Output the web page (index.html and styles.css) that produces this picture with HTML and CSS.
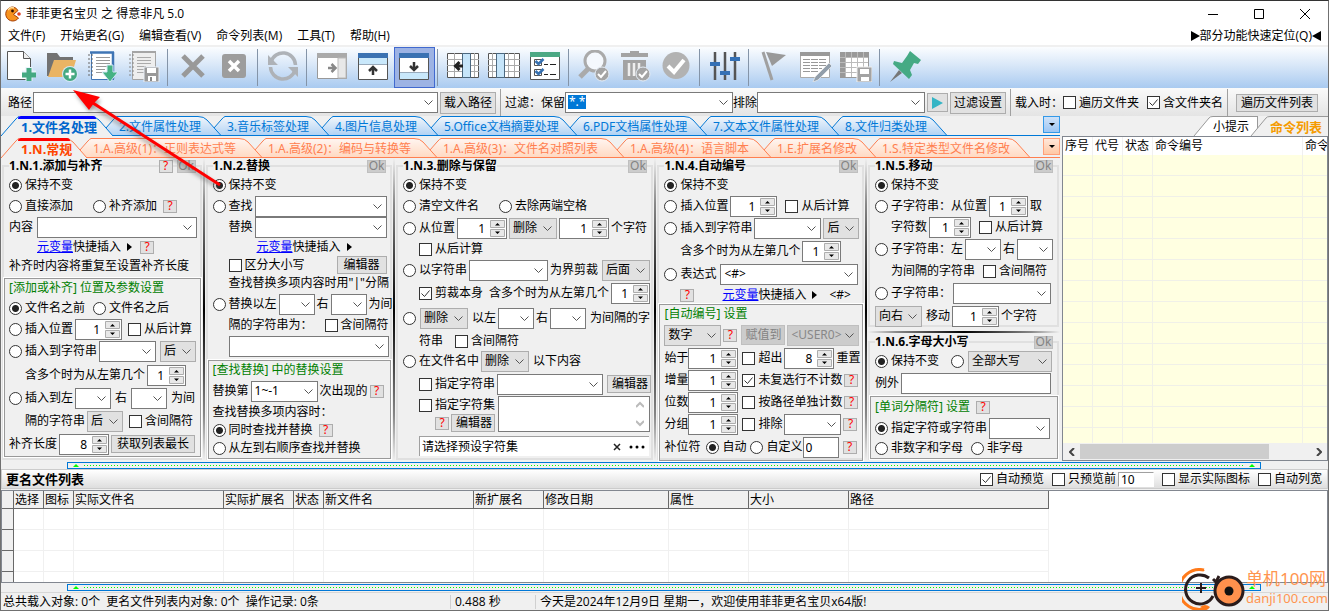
FILE: index.html
```html
<!DOCTYPE html>
<html lang="zh-CN">
<head>
<meta charset="utf-8">
<title>菲菲更名宝贝 之 得意非凡 5.0</title>
<link rel="stylesheet" href="styles.css">
</head>
<body>
<div class="window">
<header class="titlebar">
  <svg class="logo" viewBox="0 0 16 16"><path d="M8 1a7 7 0 1 0 5.500 11L8.500 8.500 13 4.500A7 7 0 0 0 8 1z" fill="#f7931e" stroke="#a63c00"/><path d="M3 4a5 5 0 0 1 6-2" stroke="#ffe0a0" stroke-width="1.500" fill="none"/><circle cx="7.500" cy="5" r="1.400" fill="#301000"/><circle cx="14" cy="8" r="1.800" fill="#e04020"/></svg>
  <h1>菲菲更名宝贝 之 得意非凡 5.0</h1>
  <div class="caption">
    <button aria-label="最小化"><svg viewBox="0 0 10 10"><path d="M0 5.500h10" stroke="#000"/></svg></button>
    <button aria-label="最大化"><svg viewBox="0 0 10 10"><path d="M.5.5h9v9h-9z" fill="none" stroke="#000"/></svg></button>
    <button aria-label="关闭"><svg viewBox="0 0 10 10"><path d="M0 0l10 10M10 0L0 10" stroke="#000"/></svg></button>
  </div>
</header>
<nav class="menubar">
  <button>文件(F)</button><button>开始更名(G)</button><button>编辑查看(V)</button><button>命令列表(M)</button><button>工具(T)</button><button>帮助(H)</button>
  <button class="quick"><svg width="9" height="10" viewBox="0 0 9 10"><path d="M0 0l9 5-9 5z"/></svg>部分功能快速定位(Q)<svg width="9" height="10" viewBox="0 0 9 10"><path d="M9 0L0 5l9 5z"/></svg></button>
</nav>

<div class="toolbar">
  <button aria-label="新建"><svg viewBox="0 0 32 32"><path d="M2.500 1.500h16l7 7v21h-23z" fill="#fff" stroke="#555"/><path d="M18.500 1.500v7h7" fill="#eee" stroke="#555"/><path d="M24 17v14M17 24h14" stroke="#eaf3fc" stroke-width="7"/><path d="M24 18v13M17 25h14" stroke="#45a982" stroke-width="5"/></svg></button>
  <button aria-label="添加文件夹"><svg viewBox="0 0 32 32"><path d="M1 3h10l3 4h13v6H8L3 26H1z" fill="#727272"/><path d="M8 10h22l-5 17H2z" fill="#eab464"/><circle cx="24" cy="24" r="8" fill="#d8e8f8"/><circle cx="24" cy="24" r="7" fill="#45a982"/><path d="M24 19.500v9M19.500 24h9" stroke="#fff" stroke-width="2.500"/></svg></button>
  <button aria-label="载入列表"><svg viewBox="0 0 32 32"><path d="M4.500 2h22v27h-22z" fill="#fff"/><path d="M3 2.500h24M26 2v27" stroke="#3f75b5" stroke-width="2.500" fill="none"/><path d="M4.500 3v26.500H27" stroke="#3f75b5" fill="none"/><path d="M9 7.500h14M9 10.500h14M9 13.500h14M9 16.500h14M9 19.500h9M9 22.500h9" stroke="#999"/><path d="M1 5h5M1 9h5M1 13h5M1 17h5M1 21h5M1 25h5" stroke="#666" stroke-dasharray="2 1"/><path d="M20 15h6v7h5l-8 10-8-10h5z" fill="#45b284" stroke="#d8e8f8"/></svg></button>
  <button aria-label="保存列表"><svg viewBox="0 0 32 32"><path d="M4.500 1.500h23v28h-23z" fill="#eee" stroke="#a5a5a5"/><path d="M4 2h24" stroke="#a5a5a5" stroke-width="2"/><path d="M9 7.500h14M9 10.500h14M9 13.500h14M9 16.500h9M9 19.500h7M9 22.500h7" stroke="#aaa"/><path d="M1 5h5M1 9h5M1 13h5M1 17h5M1 21h5M1 25h5" stroke="#888" stroke-dasharray="2 1"/><path d="M16 17h15v15H16z" fill="#999" stroke="#e8eef6"/><path d="M19 18h9v5h-9zM20 26h8v5h-8z" fill="#fff"/><path d="M22 27h2v4h-2z" fill="#888"/></svg></button>
  <i class="sep"></i>
  <button aria-label="移除"><svg viewBox="0 0 32 32"><path d="M6 6l20 20M26 6L6 26" stroke="#999" stroke-width="5"/></svg></button>
  <button aria-label="清空"><svg viewBox="0 0 32 32"><rect x="4" y="4" width="24" height="24" rx="3" fill="#9d9d9d"/><path d="M11 11l10 10M21 11L11 21" stroke="#fff" stroke-width="3.500"/></svg></button>
  <i class="sep"></i>
  <button aria-label="刷新"><svg viewBox="0 0 32 32"><path d="M4 12A12.500 12.500 0 0 1 28.500 15M28 20A12.500 12.500 0 0 1 3.500 17" fill="none" stroke="#aeb2b7" stroke-width="3.500"/><path d="M1 5v10h10zM31 27V17H21z" fill="#aeb2b7"/></svg></button>
  <i class="sep"></i>
  <button aria-label="右侧面板"><svg viewBox="0 0 32 32"><path d="M1.500 3.500h29v25h-29z" fill="#fff" stroke="#999"/><path d="M1 3h30v5H1z" fill="#aaa"/><path d="M22 8h8v20h-8z" fill="#e8e8e8" stroke="#bbb"/><path d="M12 18h7M15.500 14l4 4-4 4" stroke="#888" stroke-width="2.500" fill="none"/></svg></button>
  <button aria-label="上方面板"><svg viewBox="0 0 32 32"><path d="M1.500 3.500h29v26h-29z" fill="#fff" stroke="#555"/><path d="M1 3h30v5H1z" fill="#3b72b2"/><path d="M2 8h28v6H2z" fill="#c9e8fb"/><path d="M2 14.500h28" stroke="#9ab"/><path d="M16 25v-7M12 21l4-4 4 4" stroke="#333" stroke-width="2.500" fill="none"/></svg></button>
  <button class="on" aria-label="下方面板"><svg viewBox="0 0 32 32"><path d="M1.500 3.500h29v26h-29z" fill="#fff" stroke="#555"/><path d="M1 3h30v5H1z" fill="#3b72b2"/><path d="M2 23h28v6H2z" fill="#c9e8fb"/><path d="M2 22.500h28" stroke="#9ab"/><path d="M16 12v7M12 16l4 4 4-4" stroke="#333" stroke-width="2.500" fill="none"/></svg></button>
  <i class="sep"></i>
  <button aria-label="插入列"><svg viewBox="0 0 32 32"><path d="M.5 3.500h31v24H.5z" fill="#fff" stroke="#555"/><path d="M0 9.500h32M0 15.500h32M0 21.500h32M7.500 3v24M27.500 3v24" stroke="#aaa"/><path d="M15.500 3.500h8v24h-8z" fill="#c6e5fa" stroke="#4b6880"/><path d="M16 16H9M12.500 12l-4 4 4 4" stroke="#222" stroke-width="3" fill="none"/></svg></button>
  <button aria-label="列设置"><svg viewBox="0 0 32 32"><path d="M.5 3.500h31v24H.5z" fill="#fff" stroke="#555"/><path d="M0 9.500h32M0 15.500h32M0 21.500h32M4.500 3v24M20.500 3v24M26.500 3v24" stroke="#aaa"/><path d="M8.500 3.500h8v24h-8z" fill="#c6e5fa" stroke="#4b6880"/></svg></button>
  <button aria-label="选项列表"><svg viewBox="0 0 32 32"><path d="M1.500 2.500h29v27h-29z" fill="#fff" stroke="#555"/><path d="M1 2h30v5H1z" fill="#4ba884"/><path d="M5.500 9.500h7v6h-7zM5.500 19.500h7v6h-7z" fill="#fff" stroke="#555"/><path d="M6.500 11l3 3 5-5M6.500 21l3 3 5-5" fill="none" stroke="#3670b0" stroke-width="2.500"/><path d="M15 14.500h4M21 14.500h6M15 24.500h4M21 24.500h6" stroke="#222"/></svg></button>
  <i class="sep"></i>
  <button aria-label="查找已选"><svg viewBox="0 0 32 32"><path d="M10 19L2 27" stroke="#aaa" stroke-width="5"/><circle cx="17" cy="11" r="10" fill="#f4f8fd" stroke="#aaa" stroke-width="3"/><circle cx="24" cy="24" r="7" fill="#a4a4a4" stroke="#e5edf6"/><path d="M20 24l3 3 5-6" stroke="#fff" stroke-width="2" fill="none"/></svg></button>
  <button aria-label="删除已选"><svg viewBox="0 0 32 32"><path d="M2 3h27v4H2zM11 1h9v4h-9zM4 10h23v20H4z" fill="#a3a3a3"/><path d="M10 13v13M15 13v13M20 13v13" stroke="#eee" stroke-width="2.500"/><circle cx="24" cy="24" r="7" fill="#a4a4a4" stroke="#e5edf6"/><path d="M20 24l3 3 5-6" stroke="#fff" stroke-width="2" fill="none"/></svg></button>
  <button aria-label="执行"><svg viewBox="0 0 32 32"><circle cx="16" cy="15.500" r="13.500" fill="#b2b2b2"/><path d="M8 16l6 6 10-12" stroke="#fff" stroke-width="4" fill="none"/></svg></button>
  <i class="sep"></i>
  <button aria-label="设置"><svg viewBox="0 0 32 32"><path d="M6 2v28M16 2v28M26 2v28" stroke="#555" stroke-width="2.500"/><path d="M1 12h10v4H1zM11 21h10v4H11zM21 7h10v4H21z" fill="#3470b5"/></svg></button>
  <i class="sep"></i>
  <button aria-label="标记"><svg viewBox="0 0 32 32"><path d="M5 2l9 28" stroke="#a0a0a0" stroke-width="3"/><path d="M8 2l20 3-14 11z" fill="#999"/></svg></button>
  <button aria-label="编辑列表"><svg viewBox="0 0 32 32"><path d="M1.500 2.500h29v25h-29z" fill="#fff" stroke="#aaa"/><path d="M1 2h30v4H1z" fill="#999"/><path d="M4 9.500h24M4 12.500h24M4 15.500h24M4 18.500h19M4 21.500h15" stroke="#999" stroke-dasharray="7 1"/><path d="M30 13L16 27l-2 5 5-2 14-14z" fill="#929eaa" stroke="#eee" stroke-width=".7"/></svg></button>
  <button aria-label="保存表格"><svg viewBox="0 0 32 32"><path d="M.5 2.500h28v25H.5z" fill="#fff" stroke="#999"/><path d="M0 2h29v5H0zM0 2h5v26H0z" fill="#999"/><path d="M0 7.500h28M0 12.500h28M0 17.500h28M0 22.500h28M5.500 2v25M11.500 2v25M17.500 2v25M23.500 2v25" stroke="#bbb"/><path d="M17 17h15v15H17z" fill="#a3a3a3" stroke="#eee"/><path d="M20 19h9v5h-9zM21 27h8v4h-8z" fill="#fff"/></svg></button>
  <i class="sep"></i>
  <button aria-label="置顶"><svg viewBox="0 0 32 32"><path d="M10 20L1 32l12-9z" fill="#777"/><path d="M21 1l11 9-3 4-4-1-4 7 2 5-3 4L4 14l1-3 8 2 5-7z" fill="#45aa84"/></svg></button>
</div>

<div class="filterbar">
  <label for="path">路径</label><select id="path" class="grow"><option></option></select>
  <button class="btn">载入路径</button><i class="sep"></i>
  <label for="keep">过滤：保留</label><span class="combo"><input id="keep" class="grow" value="*.*"><mark>*.*</mark></span>
  <label for="drop">排除</label><select id="drop" class="w168"><option></option></select>
  <button class="btn play" aria-label="应用过滤"><svg width="12" height="12" viewBox="0 0 12 12"><path d="M1 0l11 6-11 6z" fill="#35b5c5"/></svg></button>
  <button class="btn">过滤设置</button><i class="sep"></i>
  <span>载入时：</span><label><input type="checkbox">遍历文件夹</label>
  <label class="ml8"><input type="checkbox" checked>含文件夹名</label><i class="sep"></i>
  <button class="btn small ml4">遍历文件列表</button>
</div>

<main>
<section class="left">
  <nav class="tabs blue">
    <button class="tab active">1.文件名处理</button><button class="tab">2.文件属性处理</button><button class="tab">3.音乐标签处理</button><button class="tab">4.图片信息处理</button><button class="tab">5.Office文档摘要处理</button><button class="tab">6.PDF文档属性处理</button><button class="tab">7.文本文件属性处理</button><button class="tab">8.文件归类处理</button><button class="more" aria-label="更多"></button>
  </nav>
  <nav class="tabs coral">
    <button class="tab active">1.N.常规</button><button class="tab">1.A.高级(1)：正则表达式等</button><button class="tab">1.A.高级(2)：编码与转换等</button><button class="tab">1.A.高级(3)：文件名对照列表</button><button class="tab">1.A.高级(4)：语言脚本</button><button class="tab">1.E.扩展名修改</button><button class="tab">1.S.特定类型文件名修改</button><button class="more" aria-label="更多"></button>
  </nav>
  <div class="panels">
    <section class="panel">
      <h2><span>1.N.1.添加与补齐</span><button class="q">?</button><button class="ok" disabled>Ok</button></h2>
      <div class="r22"><label><input type="radio" name="a" checked>保持不变</label></div>
      <div class="r20"><label><input type="radio" name="a">直接添加</label><label class="ml20"><input type="radio" name="a">补齐添加</label><button class="q ml6">?</button></div>
      <div class="r22"><label for="c1">内容</label><select id="c1" class="w160 ml4"><option></option></select></div>
      <div class="r18 in28"><a href="#">元变量</a><span>快捷插入</span><i class="tri"></i><button class="q ml8">?</button></div>
      <div class="r20">补齐时内容将重复至设置补齐长度</div>
      <div class="group">
        <h3 class="r18">[添加或补齐] 位置及参数设置</h3>
        <div class="r22"><label><input type="radio" name="b" checked>文件名之前</label><label class="ml8"><input type="radio" name="b">文件名之后</label></div>
        <div class="r20"><label><input type="radio" name="b">插入位置</label><input type="number" class="w47 ml2" value="1" aria-label="位置"><label class="ml6"><input type="checkbox">从后计算</label></div>
        <div class="r24"><label><input type="radio" name="b">插入到字符串</label><select class="w57 ml2" aria-label="字符串"><option></option></select><select class="gray w36 ml4" aria-label="前后"><option>后</option></select></div>
        <div class="r24 in16">含多个时为从左第几个<input type="number" class="w39 ml2" value="1" aria-label="第几个"></div>
        <div class="r22"><label><input type="radio" name="b">插入到左</label><select class="w36 ml2" aria-label="左"><option></option></select><span class="ml4">右</span><select class="w36 ml4" aria-label="右"><option></option></select><span class="ml4">为间</span></div>
        <div class="r24 in16">隔的字符串<select class="gray w36 ml2" aria-label="前后"><option>后</option></select><label class="ml6"><input type="checkbox">含间隔符</label></div>
        <div class="r22"><label for="len">补齐长度</label><input type="number" id="len" class="w50 ml2" value="8"><button class="btn small w84 ml2">获取列表最长</button></div>
      </div>
    </section>
    <i class="rule"></i>
    <section class="panel">
      <h2><span>1.N.2.替换</span><button class="ok" disabled>Ok</button></h2>
      <div class="r22"><label><input type="radio" name="c" checked>保持不变</label></div>
      <div class="r20"><label><input type="radio" name="c">查找</label><select class="w132 ml2" aria-label="查找"><option></option></select></div>
      <div class="r22 in16">替换<select class="w132 ml2" aria-label="替换"><option></option></select></div>
      <div class="r18 in44"><a href="#">元变量</a><span>快捷插入</span><i class="tri"></i></div>
      <div class="r18 in16"><label><input type="checkbox">区分大小写</label><button class="btn small w50 ml32">编辑器</button></div>
      <div class="r18 in16">查找替换多项内容时用"|"分隔</div>
      <div class="r24"><label><input type="radio" name="c">替换以左</label><select class="w36 ml2" aria-label="左"><option></option></select><span class="ml2">右</span><select class="w36 ml2" aria-label="右"><option></option></select><span class="ml2">为间</span></div>
      <div class="r18 in16">隔的字符串为：<label class="ml12"><input type="checkbox">含间隔符</label></div>
      <div class="r24 in16"><select class="w160" aria-label="替换内容"><option></option></select></div>
      <div class="group">
        <h3 class="r18">[查找替换] 中的替换设置</h3>
        <div class="r24">替换第<select class="w67 ml2" aria-label="次数"><option>1~-1</option></select><span class="ml2">次出现的</span><button class="q ml2">?</button></div>
        <div class="r18">查找替换多项内容时：</div>
        <div class="r18"><label><input type="radio" name="d" checked>同时查找并替换</label><button class="q ml6">?</button></div>
        <div class="r18"><label><input type="radio" name="d">从左到右顺序查找并替换</label></div>
      </div>
    </section>
    <i class="rule"></i>
    <section class="panel">
      <h2><span>1.N.3.删除与保留</span><button class="ok" disabled>Ok</button></h2>
      <div class="r22"><label><input type="radio" name="e" checked>保持不变</label></div>
      <div class="r20"><label><input type="radio" name="e">清空文件名</label><label class="ml20"><input type="radio" name="e">去除两端空格</label></div>
      <div class="r24"><label><input type="radio" name="e">从位置</label><input type="number" class="w50 ml2" value="1" aria-label="位置"><select class="gray w48 ml2" aria-label="操作"><option>删除</option></select><input type="number" class="w50 ml2" value="1" aria-label="字数"><span class="ml2">个字符</span></div>
      <div class="r18 in16"><label><input type="checkbox">从后计算</label></div>
      <div class="r24"><label><input type="radio" name="e">以字符串</label><select class="w79 ml2" aria-label="字符串"><option></option></select><span class="ml2">为界剪裁</span><select class="gray w48 ml4" aria-label="方向"><option>后面</option></select></div>
      <div class="r22 in16"><label><input type="checkbox" checked>剪裁本身</label><span class="ml6">含多个时为从左第几个</span><input type="number" class="w39 ml2" value="1" aria-label="第几个"></div>
      <div class="r28"><input type="radio" name="e" aria-label="间隔"><select class="gray w48 ml4" aria-label="操作"><option>删除</option></select><span class="ml4">以左</span><select class="w36 ml2" aria-label="左"><option></option></select><span class="ml2">右</span><select class="w36 ml2" aria-label="右"><option></option></select><span class="ml4">为间隔的字</span></div>
      <div class="r18 in16">符串<label class="ml12"><input type="checkbox">含间隔符</label></div>
      <div class="r22"><label><input type="radio" name="e">在文件名中</label><select class="gray w48 ml2" aria-label="操作"><option>删除</option></select><span class="ml4">以下内容</span></div>
      <div class="r24 in16"><label><input type="checkbox">指定字符串</label><select class="w106 ml2" aria-label="指定字符串"><option></option></select><button class="btn small w44 ml4">编辑器</button></div>
      <div class="charset in16">
        <div><label class="r18"><input type="checkbox">指定字符集</label><div class="r18 in16"><button class="q">?</button><button class="btn small w44 ml2">编辑器</button></div></div>
        <div class="area"><textarea aria-label="字符集"></textarea><svg width="8" height="26" viewBox="0 0 8 26"><path d="M0 6l4-4 4 4M0 20l4 4 4-4" fill="none" stroke="#bbb" stroke-width="2"/></svg></div>
      </div>
      <div class="r24 in16"><div class="preset"><input value="请选择预设字符集" aria-label="预设字符集"><button aria-label="清除"><svg width="8" height="8" viewBox="0 0 8 8"><path d="M1 1l6 6M7 1L1 7" stroke="#222" stroke-width="1.500"/></svg></button><button aria-label="更多"><svg width="16" height="4" viewBox="0 0 16 4"><circle cx="2" cy="2" r="1.500"/><circle cx="8" cy="2" r="1.500"/><circle cx="14" cy="2" r="1.500"/></svg></button></div></div>
    </section>
    <i class="rule"></i>
    <section class="panel">
      <h2><span>1.N.4.自动编号</span><button class="ok" disabled>Ok</button></h2>
      <div class="r22"><label><input type="radio" name="f" checked>保持不变</label></div>
      <div class="r20"><label><input type="radio" name="f">插入位置</label><input type="number" class="w47 ml2" value="1" aria-label="位置"><label class="ml8"><input type="checkbox">从后计算</label></div>
      <div class="r24"><label><input type="radio" name="f">插入到字符串</label><select class="w67 ml2" aria-label="字符串"><option></option></select><select class="gray w36 ml2" aria-label="前后"><option>后</option></select></div>
      <div class="r22 in16">含多个时为从左第几个<input type="number" class="w39 ml2" value="1" aria-label="第几个"></div>
      <div class="r24"><label><input type="radio" name="f">表达式</label><select class="w138 ml4" aria-label="表达式"><option>&lt;#&gt;</option></select></div>
      <div class="r18 in16"><button class="q">?</button><a href="#" class="ml28">元变量</a><span>快捷插入</span><i class="tri"></i><span class="ml12">&lt;#&gt;</span></div>
      <div class="group flush">
        <h3 class="r18">[自动编号] 设置</h3>
        <div class="r24"><select class="gray w57" aria-label="类型"><option>数字</option></select><button class="q ml2">?</button><button class="btn w44 ml4" disabled>赋值到</button><select class="w72 ml2" disabled aria-label="变量"><option>&lt;USER0&gt;</option></select></div>
        <div class="r22"><label for="n1">始于</label><input type="number" id="n1" class="w50" value="1"><label class="ml4"><input type="checkbox">超出</label><input type="number" class="w50 ml2" value="8" aria-label="超出"><span class="ml2">重置</span></div>
        <div class="r22"><label for="n2">增量</label><input type="number" id="n2" class="w50" value="1"><label class="ml4"><input type="checkbox" checked>未复选行不计数</label><button class="q ml2">?</button></div>
        <div class="r22"><label for="n3">位数</label><input type="number" id="n3" class="w50" value="1"><label class="ml4"><input type="checkbox">按路径单独计数</label><button class="q ml2">?</button></div>
        <div class="r22"><label for="n4">分组</label><input type="number" id="n4" class="w50" value="1"><label class="ml4"><input type="checkbox">排除</label><select class="w57 ml2" aria-label="排除"><option></option></select><button class="q ml2">?</button></div>
        <div class="r24"><span>补位符</span><label class="ml6"><input type="radio" name="g" checked>自动</label><label class="ml4"><input type="radio" name="g">自定义</label><input type="text" class="w36" value="0" aria-label="补位符"><button class="q ml4">?</button></div>
      </div>
    </section>
    <i class="rule"></i>
    <div class="stack">
      <section class="panel">
        <h2><span>1.N.5.移动</span><button class="ok" disabled>Ok</button></h2>
        <div class="r22"><label><input type="radio" name="h" checked>保持不变</label></div>
        <div class="r20"><label><input type="radio" name="h">子字符串：从位置</label><input type="number" class="w39 ml2" value="1" aria-label="位置"><span class="ml2">取</span></div>
        <div class="r22 in16">字符数<input type="number" class="w42 ml2" value="1" aria-label="字符数"><label class="ml8"><input type="checkbox">从后计算</label></div>
        <div class="r22"><label><input type="radio" name="h">子字符串：左</label><select class="w36 ml2" aria-label="左"><option></option></select><span class="ml2">右</span><select class="w36 ml2" aria-label="右"><option></option></select></div>
        <div class="r22 in16">为间隔的字符串<label class="ml8"><input type="checkbox">含间隔符</label></div>
        <div class="r22"><label><input type="radio" name="h">子字符串：</label><select class="w98 ml2" aria-label="子字符串"><option></option></select></div>
        <div class="r24"><select class="gray w47" aria-label="方向"><option>向右</option></select><span class="ml4">移动</span><input type="number" class="w47 ml2" value="1" aria-label="移动"><span class="ml2">个字符</span></div>
      </section>
      <i class="hrule"></i>
      <section class="panel">
        <h2><span>1.N.6.字母大小写</span><button class="ok" disabled>Ok</button></h2>
        <div class="r22"><label><input type="radio" name="i" checked>保持不变</label><input type="radio" name="i" class="ml12" aria-label="转换"><select class="gray w84 ml4" aria-label="大小写"><option>全部大写</option></select></div>
        <div class="r22"><label for="exc">例外</label><input type="text" id="exc" class="w150 ml2"></div>
        <div class="group">
          <h3 class="r20">[单词分隔符] 设置<button class="q ml6">?</button></h3>
          <div class="r22"><label><input type="radio" name="j" checked>指定字符或字符串</label><select class="w61 ml2" aria-label="分隔符"><option></option></select></div>
          <div class="r18"><label><input type="radio" name="j">非数字和字母</label><label class="ml8"><input type="radio" name="j">非字母</label></div>
        </div>
      </section>
    </div>
  </div>
</section>

<aside class="right">
  <nav class="sidetabs"><button class="tip">小提示</button><button class="cmd">命令列表</button></nav>
  <div class="list">
    <div class="listview"><table class="commands">
      <thead><tr><th>序号</th><th>代号</th><th>状态</th><th>命令编号</th><th>命令</th></tr></thead>
      <tbody>
        <tr><td><td><td><td><td></tr><tr><td><td><td><td><td></tr><tr><td><td><td><td><td></tr><tr><td><td><td><td><td></tr><tr><td><td><td><td><td></tr><tr><td><td><td><td><td></tr><tr><td><td><td><td><td></tr>
        <tr><td><td><td><td><td></tr><tr><td><td><td><td><td></tr><tr><td><td><td><td><td></tr><tr><td><td><td><td><td></tr><tr><td><td><td><td><td></tr><tr><td><td><td><td><td></tr><tr><td><td><td><td><td></tr>
      </tbody>
    </table></div>
    <div class="scroll"><button aria-label="向左"><svg width="6" height="8" viewBox="0 0 6 8"><path d="M5 0L1 4l4 4" fill="none" stroke="#444" stroke-width="2"/></svg></button><div><i></i></div><button aria-label="向右"><svg width="6" height="8" viewBox="0 0 6 8"><path d="M1 0l4 4-4 4" fill="none" stroke="#444" stroke-width="2"/></svg></button></div>
  </div>
</aside>
</main>

<div class="splitter"><i></i><b></b><i></i></div>

<section class="files">
  <header>
    <h2>更名文件列表</h2>
    <label><input type="checkbox" checked>自动预览</label>
    <label class="ml8"><input type="checkbox">只预览前</label><input type="text" class="w36 ml2" value="10" aria-label="预览数量">
    <label class="ml8"><input type="checkbox">显示实际图标</label>
    <label class="ml8"><input type="checkbox">自动列宽</label>
  </header>
  <div class="tablewrap"><table class="renames">
    <colgroup><col class="c12"><col class="c30"><col class="c30"><col class="c150"><col class="c70"><col class="c30"><col class="c150"><col class="c70"><col class="c125"><col class="c80"><col class="c100"><col class="c200"></colgroup>
    <thead><tr><th></th><th>选择</th><th>图标</th><th>实际文件名</th><th>实际扩展名</th><th>状态</th><th>新文件名</th><th>新扩展名</th><th>修改日期</th><th>属性</th><th>大小</th><th>路径</th></tr></thead>
    <tbody>
      <tr><th></th><td><td><td><td><td><td><td><td><td><td><td></tr>
      <tr><th></th><td><td><td><td><td><td><td><td><td><td><td></tr>
      <tr><th></th><td><td><td><td><td><td><td><td><td><td><td></tr>
      <tr><th></th><td><td><td><td><td><td><td><td><td><td><td></tr>
    </tbody>
  </table></div>
</section>

<div class="splitter"><i></i><b></b><i></i></div>

<footer class="status"><span>总共载入对象: 0个&nbsp; 更名文件列表内对象: 0个&nbsp; 操作记录: 0条</span><span>0.488 秒</span><span>今天是2024年12月9日 星期一，欢迎使用菲菲更名宝贝x64版!</span></footer>

<svg class="arrow" viewBox="0 0 160 110"><g class="shade"><path d="M24 19l127 82" stroke="#555" stroke-width="3"/><path d="M6 6l26 8-6 5-5 6z" fill="#555"/></g><path d="M24 16l127 82" stroke="#f00" stroke-width="3"/><path d="M4 3l27 7-6 6-5 7z" fill="#f00"/></svg>

<div class="watermark">
  <svg width="64" height="44" viewBox="0 0 64 44"><path d="M22 4A20 20 0 1 0 25 42" fill="none" stroke="#ff7a1a" stroke-width="3"/><path d="M13 5q5-6 10 0M18 41q5-4 10 0-3 5-8 1z" fill="#ff7a1a"/><path d="M27 12A14.500 14.500 0 1 0 31 30" fill="none" stroke="#2a1c1c" stroke-width="3"/><path d="M14 22h10M19 17v10" stroke="#2a1c1c" stroke-width="2"/><path d="M31 13l4 4M37 10q-5 8-2 17" stroke="#2a1c1c" stroke-width="3" fill="none"/><circle cx="47" cy="25" r="14" fill="#ff914d" stroke="#2a1c1c" stroke-width="3"/><circle cx="47" cy="25" r="4.500" fill="#111"/></svg>
  <div><strong>单机100网</strong><span>danji100.com</span></div>
</div>
</div>
</body>
</html>
```

FILE: styles.css
```css
* { box-sizing: border-box; }
body, h1, h2, h3 { margin: 0; font-size: 12px; font-weight: 400; }
body { font-family: "Noto Sans", "Noto Sans CJK SC", sans-serif; line-height: 14px; color: #000; background: #f0f0f0; white-space: nowrap; }
button, input, select, textarea { font: inherit; color: inherit; margin: 0; padding: 0; border: 0; border-radius: 0; outline: 0; background: none; }
svg { display: block; }
i { font-style: normal; }
.window { position: relative; display: flex; flex-direction: column; min-height: 100vh; border: 1px solid #707070; border-top-color: #333; background: #f0f0f0; }

.titlebar { display: flex; align-items: center; height: 25px; padding-left: 4px; background: #fff; }
.titlebar h1 { flex: 1; font-family: "Open Sans", "Noto Sans CJK SC", sans-serif; }
.logo { width: 16px; height: 16px; margin-right: 5px; }
.caption { display: flex; }
.caption button { width: 46px; height: 24px; display: grid; place-items: center; }
.caption svg { width: 10px; height: 10px; }
.menubar { display: flex; gap: 15px; height: 21px; padding: 1px 7px 0; background: #fff; border-bottom: 2px solid #f0f0f0; font-family: "Open Sans", "Noto Sans CJK SC", sans-serif; }
.menubar .quick { display: flex; align-items: center; margin-left: auto; }

.toolbar { display: flex; height: 41px; background: linear-gradient(#fbfdff, #d8e7f8 45%, #a9caf0); }
.toolbar button { width: 41px; padding: 0 2px 3px 0; display: grid; place-items: center; }
.toolbar button svg { width: 32px; height: 32px; }
.toolbar .on { background: #9db3e4; box-shadow: inset 0 0 0 1px #4169cf; }
.toolbar .sep { width: 6px; border-left: 1px solid #8494a8; margin: 2px 0 2px 2px; }

.filterbar { display: flex; align-items: center; height: 28px; padding: 1px 10px 0 7px; background: linear-gradient(#fafafa, #e4e4e4); }
.filterbar .sep { align-self: stretch; border-left: 1px solid #a0a0a0; margin: 0 4px; }
.filterbar .btn { margin-left: 2px; }
.filterbar .play { width: 21px; height: 19px; display: grid; place-items: center; }
.grow { flex: 1; }
.combo { position: relative; display: flex; width: 168px; }
.combo input { width: 100%; height: 21px; border: 1px solid #7a7a7a; padding-left: 3px; background: url("data:image/svg+xml,%3Csvg xmlns='http://www.w3.org/2000/svg' width='9' height='5'%3E%3Cpath d='M.5.5l4 4 4-4' fill='none' stroke='%23555'/%3E%3C/svg%3E") right 4px center no-repeat #fff; color: transparent; }
.combo mark { position: absolute; left: 3px; top: 3px; height: 14px; padding: 0 1px; background: #0078d7; color: #fff; }

label { display: inline-flex; align-items: center; }
label > input[type=radio], label > input[type=checkbox] { margin-right: 3px; }
input[type=radio], input[type=checkbox] { appearance: none; flex: none; width: 13px; height: 13px; border: 1px solid #333; background: #fff; }
input[type=radio] { border-radius: 50%; }
input[type=radio]:checked { background: radial-gradient(circle, #222 3px, #fff 4px); }
input[type=checkbox]:checked { background: url("data:image/svg+xml,%3Csvg xmlns='http://www.w3.org/2000/svg' width='11' height='11'%3E%3Cpath d='M1.500 5.500l3 3 5-6' fill='none' stroke='%23333'/%3E%3C/svg%3E") #fff; }
select { appearance: none; flex-shrink: 0; height: 21px; padding: 0 3px; border: 1px solid #7a7a7a; background: url("data:image/svg+xml,%3Csvg xmlns='http://www.w3.org/2000/svg' width='9' height='5'%3E%3Cpath d='M.5.5l4 4 4-4' fill='none' stroke='%23555'/%3E%3C/svg%3E") right 4px center no-repeat #fff; }
select.grow { flex: 1; margin-left: 1px; }
select.gray { background-color: #e1e1e1; border-color: #adadad; }
select:disabled { color: #888; background-color: #ccc; border-color: #bfbfbf; opacity: 1; }
input[type=text], input[type=number] { flex: none; height: 21px; border: 1px solid #7a7a7a; background: #fff; padding: 0 2px; }
input[type=number] { appearance: textfield; text-align: right; padding-right: 21px; background: url("data:image/svg+xml,%3Csvg xmlns='http://www.w3.org/2000/svg' width='15' height='17'%3E%3Cpath d='M.5.5h14v7H.5zM.5 9.500h14v7H.5z' fill='%23e8e8e8' stroke='%23adadad'/%3E%3Cpath d='M5 5.500h5L7.500 3zM5 11.500h5L7.500 14z'/%3E%3C/svg%3E") right 1px center no-repeat #fff; }
input::-webkit-inner-spin-button { display: none; }
.btn { flex: none; height: 22px; padding: 0 3px; border: 1px solid #adadad; background: #e1e1e1; }
.btn.small { height: 18px; line-height: 14px; padding: 0 4px; }
.btn:disabled { height: 20px; background: #ccc; border-color: #bfbfbf; color: #838383; }
.q { flex: none; width: 14px; height: 13px; border: 1px solid #adadad; background: #e1e1e1; color: #f00; line-height: 10px; }
.ok { flex: none; width: 19px; height: 13px; background: #ccc; border: 1px solid #bfbfbf; color: #838383; line-height: 10px; }
a { color: #00f; }
.tri { border: 4px solid transparent; border-left: 5px solid #000; border-right: 0; margin-left: 6px; }

main { display: flex; align-items: stretch; flex: none; }
.left { flex: 1; min-width: 0; }
.tabs { display: flex; height: 20px; margin-right: 2px; border-bottom: 1px solid; }
.tabs.blue { margin-bottom: 2px; }
.tabs .tab { position: relative; flex: none; height: 20px; padding: 2px 0 0 20px; margin-left: -15px; text-align: left; background-repeat: no-repeat; background-position: left top, right top, 18px top; background-size: 18px 20px, 24px 20px, calc(100% - 42px) 20px; }
.tabs .tab:first-child { margin-left: 0; }
.tabs .active { font-size: 13px; font-weight: 700; }
.tabs .active::before { content: ""; position: absolute; top: 0; left: 17px; right: 18px; height: 3px; border-radius: 3px 3px 0 0; }
.tab:nth-child(1) { z-index: 8; } .tab:nth-child(2) { z-index: 7; } .tab:nth-child(3) { z-index: 6; } .tab:nth-child(4) { z-index: 5; }
.tab:nth-child(5) { z-index: 4; } .tab:nth-child(6) { z-index: 3; } .tab:nth-child(7) { z-index: 2; } .tab:nth-child(8) { z-index: 1; }
.blue { color: #0078d7; }
.blue .tab { background-image: url("data:image/svg+xml,%3Csvg xmlns='http://www.w3.org/2000/svg' width='18' height='20'%3E%3Cdefs%3E%3ClinearGradient id='g' x2='0' y2='1'%3E%3Cstop stop-color='%23f2f6fb'/%3E%3Cstop offset='1' stop-color='%23b0d2f4'/%3E%3C/linearGradient%3E%3C/defs%3E%3Cpath d='M0 20L16 3Q18 1 18 .5V19.500H0z' fill='url(%23g)'/%3E%3Cpath d='M0 20L14 4Q17 .5 18 .5M0 19.500h18' fill='none' stroke='%230078d7'/%3E%3C/svg%3E"), url("data:image/svg+xml,%3Csvg xmlns='http://www.w3.org/2000/svg' width='24' height='20'%3E%3Cdefs%3E%3ClinearGradient id='g' x2='0' y2='1'%3E%3Cstop stop-color='%23f2f6fb'/%3E%3Cstop offset='1' stop-color='%23b0d2f4'/%3E%3C/linearGradient%3E%3C/defs%3E%3Cpath d='M0 .5Q6 .5 9 4L23 19.500H0z' fill='url(%23g)'/%3E%3Cpath d='M0 .5Q6 .5 9 4L23 19.500H0' fill='none' stroke='%230078d7'/%3E%3C/svg%3E"), linear-gradient(#0078d7 1px, #f2f6fb 1px, #b0d2f4 19px, #0078d7 19px); }
.blue .active { color: #0066cc; background-image: url("data:image/svg+xml,%3Csvg xmlns='http://www.w3.org/2000/svg' width='18' height='20'%3E%3Cpath d='M0 20L14 4Q17 .5 18 .5V20z' fill='%23f0f0f0'/%3E%3Cpath d='M0 20L14 4Q17 .5 18 .5' fill='none' stroke='%230078d7'/%3E%3C/svg%3E"), url("data:image/svg+xml,%3Csvg xmlns='http://www.w3.org/2000/svg' width='24' height='20'%3E%3Cpath d='M0 .5Q6 .5 9 4L23 20H0z' fill='%23f0f0f0'/%3E%3Cpath d='M0 .5Q6 .5 9 4L23 20' fill='none' stroke='%230078d7'/%3E%3C/svg%3E"), linear-gradient(#f0f0f0, #f0f0f0); }
.blue .active::before { background: #00f; }
.coral { color: #ff7f50; }
.coral .tab { background-image: url("data:image/svg+xml,%3Csvg xmlns='http://www.w3.org/2000/svg' width='18' height='20'%3E%3Cdefs%3E%3ClinearGradient id='g' x2='0' y2='1'%3E%3Cstop stop-color='%23fff5f0'/%3E%3Cstop offset='1' stop-color='%23ffd9c2'/%3E%3C/linearGradient%3E%3C/defs%3E%3Cpath d='M0 20L16 3Q18 1 18 .5V19.500H0z' fill='url(%23g)'/%3E%3Cpath d='M0 20L14 4Q17 .5 18 .5M0 19.500h18' fill='none' stroke='%23ff7f50'/%3E%3C/svg%3E"), url("data:image/svg+xml,%3Csvg xmlns='http://www.w3.org/2000/svg' width='24' height='20'%3E%3Cdefs%3E%3ClinearGradient id='g' x2='0' y2='1'%3E%3Cstop stop-color='%23fff5f0'/%3E%3Cstop offset='1' stop-color='%23ffd9c2'/%3E%3C/linearGradient%3E%3C/defs%3E%3Cpath d='M0 .5Q6 .5 9 4L23 19.500H0z' fill='url(%23g)'/%3E%3Cpath d='M0 .5Q6 .5 9 4L23 19.500H0' fill='none' stroke='%23ff7f50'/%3E%3C/svg%3E"), linear-gradient(#ff7f50 1px, #fff5f0 1px, #ffd9c2 19px, #ff7f50 19px); }
.coral .active { color: #ff4500; background-image: url("data:image/svg+xml,%3Csvg xmlns='http://www.w3.org/2000/svg' width='18' height='20'%3E%3Cpath d='M0 20L14 4Q17 .5 18 .5V20z' fill='%23f0f0f0'/%3E%3Cpath d='M0 20L14 4Q17 .5 18 .5' fill='none' stroke='%23ff7f50'/%3E%3C/svg%3E"), url("data:image/svg+xml,%3Csvg xmlns='http://www.w3.org/2000/svg' width='24' height='20'%3E%3Cpath d='M0 .5Q6 .5 9 4L23 20H0z' fill='%23f0f0f0'/%3E%3Cpath d='M0 .5Q6 .5 9 4L23 20' fill='none' stroke='%23ff7f50'/%3E%3C/svg%3E"), linear-gradient(#f0f0f0, #f0f0f0); }
.coral .active::before { background: #f00; }
.blue .tab:nth-child(1) { width: 113px; }
.blue .tab:nth-child(2), .blue .tab:nth-child(3), .blue .tab:nth-child(8) { width: 123px; }
.blue .tab:nth-child(4) { width: 124px; }
.blue .tab:nth-child(5) { width: 154px; }
.blue .tab:nth-child(6) { width: 145px; }
.blue .tab:nth-child(7) { width: 147px; }
.coral .tab:nth-child(1) { width: 87px; }
.coral .tab:nth-child(2), .coral .tab:nth-child(3) { width: 190px; }
.coral .tab:nth-child(4) { width: 202px; }
.coral .tab:nth-child(5) { width: 162px; }
.coral .tab:nth-child(6) { width: 120px; }
.coral .tab:nth-child(7) { width: 169px; }
.more { width: 17px; height: 17px; margin-left: auto; border: 1px solid #3399e8; background: linear-gradient(#cfe2f8, #9cc6f4); display: grid; place-items: center; }
.more::before { content: ""; border: 3px solid transparent; border-top-color: #000; border-bottom: 0; }
.coral .more { border-color: #ffa07a; background: linear-gradient(#ffe8da, #ffc8a4); }

.panels { display: grid; grid-template-columns: 201fr 3px 188fr 3px 259fr 3px 208fr 3px 190fr; height: 303px; margin: 0 2px 0 1px; }
.panel { position: relative; min-width: 0; padding: 0 7px; }
.panel::before { content: ""; position: absolute; inset: 7px 1px 1px 0; border: 2px solid #e0e0e0; }
.panel > * { position: relative; }
.panel h2 { display: flex; align-items: center; height: 16px; gap: 4px; font-weight: 700; }
.panel h2 span { margin-right: auto; background: #f0f0f0; }
.panel h2 button { font-weight: 400; }
.rule { background: linear-gradient(#f0f0f0, #888 15%, #000 50%, #888 85%, #f0f0f0); width: 2px; }
.hrule { display: block; height: 2px; margin: 3px 0 1px; background: linear-gradient(90deg, #f0f0f0, #888 15%, #000 50%, #888 85%, #f0f0f0); }
.stack { display: flex; flex-direction: column; }
.stack .panel:last-child { flex: 1; }
.r18, .r20, .r22, .r24, .r28 { display: flex; align-items: center; }
.r18 { height: 18px; } .r20 { height: 20px; } .r22 { height: 22px; } .r24 { height: 24px; } .r28 { height: 28px; }
.in16 { padding-left: 16px; } .in28 { padding-left: 28px; } .in44 { padding-left: 44px; }
.group { margin: 2px -5px 0; padding: 0 0 1px 4px; border: 1px solid #999; outline: 1px solid #fff; }
.group.flush { margin-top: 0; }
.group h3 { color: #008000; }
.charset { display: flex; justify-content: space-between; height: 38px; padding-bottom: 2px; }
.area { position: relative; width: 152px; margin-right: -3px; }
.area textarea { width: 100%; height: 36px; resize: none; border: 1px solid #7a7a7a; background: #fff; }
.area svg { position: absolute; right: 6px; top: 5px; }
.preset { display: flex; flex: 1; height: 20px; margin-right: -2px; padding: 0 4px 0 2px; background: #fff; border-top: 1px solid #a0a0a0; border-left: 1px solid #a0a0a0; }
.preset input { flex: 1; min-width: 0; }
.preset button { margin-left: 8px; }

.w36 { width: 36px; } .w39 { width: 39px; } .w42 { width: 42px; } .w44 { width: 44px; } .w47 { width: 47px; } .w48 { width: 48px; } .w50 { width: 50px; }
.w57 { width: 57px; } .w61 { width: 61px; } .w67 { width: 67px; } .w72 { width: 72px; } .w79 { width: 79px; } .w84 { width: 84px; } .w98 { width: 98px; }
.w106 { width: 106px; } .w132 { width: 132px; } .w138 { width: 138px; } .w150 { width: 150px; } .w160 { width: 160px; } .w168 { width: 168px; }
.ml2 { margin-left: 2px; } .ml4, .filterbar .ml4 { margin-left: 4px; } .ml6 { margin-left: 6px; } .ml8 { margin-left: 8px; } .ml12 { margin-left: 12px; }
.ml20 { margin-left: 20px; } .ml28 { margin-left: 28px; } .ml32 { margin-left: 32px; }

.right { width: 266px; display: flex; flex-direction: column; }
.sidetabs { display: flex; justify-content: flex-end; height: 20px; }
.sidetabs button { height: 20px; }
.sidetabs .tip { padding: 1px 8px 0 20px; background: url("data:image/svg+xml,%3Csvg xmlns='http://www.w3.org/2000/svg' width='20' height='20'%3E%3Cpath d='M1 20L16 2Q17 .5 20 .5V20' fill='%23fff'/%3E%3Cpath d='M1 20L16 2Q17 .5 20 .5' fill='none' stroke='%23999'/%3E%3C/svg%3E") no-repeat, linear-gradient(#999 1px, #fff 1px) 20px 0 no-repeat; border-right: 1px solid #999; }
.sidetabs .cmd { position: relative; margin-left: -8px; font-size: 13px; font-weight: 700; color: #f59b00; padding: 1px 6px 0 20px; background: url("data:image/svg+xml,%3Csvg xmlns='http://www.w3.org/2000/svg' width='20' height='20'%3E%3Cpath d='M1 20L16 2Q17 .5 20 .5V20' fill='%23f0f0f0'/%3E%3Cpath d='M1 20L16 2Q17 .5 20 .5' fill='none' stroke='%23999'/%3E%3C/svg%3E") no-repeat, linear-gradient(#999 1px, #f0f0f0 1px) 20px 0 no-repeat; }
.list { flex: 1; display: flex; flex-direction: column; border: 1px solid #828790; background: #ffffe1; }
.listview { flex: none; height: 306px; overflow: hidden; }
table { border-collapse: separate; border-spacing: 0; table-layout: fixed; }
th, td { padding: 0; text-align: left; font-weight: 400; overflow: hidden; }
.commands { width: 340px; }
.commands th { width: 30px; height: 18px; padding-left: 2px; background: #fff; border-right: 1px solid #f0f0f0; }
.commands th:nth-child(4) { width: 150px; }
.commands th:nth-child(5) { width: 100px; }
.commands td { height: 21px; border-right: 1px solid #f0f0e8; border-bottom: 1px solid #f0f0e8; }
.scroll { display: flex; height: 17px; background: #f0f0f0; }
.scroll button { width: 17px; display: grid; place-items: center; }
.scroll div { flex: 1; }
.scroll div i { display: block; width: 82%; height: 15px; margin-top: 1px; background: #cdcdcd; }

.splitter { flex: none; display: flex; align-items: center; height: 7px; margin: 1px 67px 0 66px; border: 1px solid #0078d7; background: #f0f0f0; }
.splitter i { margin: 0 5px; border: 3px solid transparent; border-bottom: 3px solid #0f0; border-top: 0; }
.splitter b { flex: 1; height: 1px; background: repeating-linear-gradient(90deg, #0f0 0 1px, #f0f0f0 1px 3px); }
.files header { display: flex; align-items: center; height: 20px; padding: 0 5px 0 4px; border: 1px solid #ccc; background: linear-gradient(#fff, #dedede); }
.files h2 { flex: 1; font-size: 13px; font-weight: 700; }
.files header input[type=text] { height: 15px; border-color: #a0a0a0 #fff #fff #a0a0a0; }
.files { flex: none; }
.tablewrap { height: 93px; margin-top: 1px; overflow: hidden; border: 1px solid #828790; background: #fff; }
.c12 { width: 12px; } .c30 { width: 30px; } .c70 { width: 70px; } .c80 { width: 80px; } .c100 { width: 100px; } .c125 { width: 125px; } .c150 { width: 150px; } .c200 { width: 200px; }
.renames { width: 1047px; }
.renames th { height: 18px; padding-left: 1px; background: #f0f0f0; border-right: 1px solid #696969; border-bottom: 1px solid #696969; }
.renames tbody th, .renames td { height: 21px; }
.renames td { border-right: 1px solid #f0f0f0; border-bottom: 1px solid #f0f0f0; }
.status { flex: none; display: flex; align-items: center; height: 18px; margin-top: 1px; border-top: 1px solid #d7d7d7; font-family: "Open Sans", "Noto Sans CJK SC", sans-serif; }
.status span { padding: 0 4px; border-left: 1px solid #d0d0d0; width: 85px; }
.status span:first-child { width: 449px; padding-left: 2px; border: 0; }
.status span:last-child { flex: 1; }
.arrow { position: absolute; left: 68px; top: 86px; width: 160px; height: 110px; z-index: 20; pointer-events: none; }
.arrow .shade { filter: blur(2px); opacity: .6; }
.watermark { position: absolute; right: 0; bottom: 0; z-index: 20; display: flex; align-items: center; color: #ff9550; }
.watermark div { display: flex; flex-direction: column; }
.watermark strong { font-size: 17px; line-height: 20px; font-weight: 400; }
.watermark span { font-size: 13px; line-height: 18px; }
```
